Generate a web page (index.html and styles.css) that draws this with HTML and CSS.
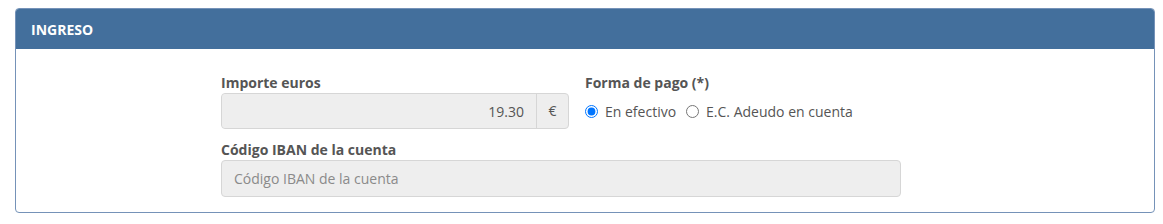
FILE: index.html
```html
<html>
  <head>
    <link rel="stylesheet" href="styles.css">
    <title>Ingreso</title>
  </head>
  <body>
    <section class="panel">
      <div class="panel-heading">INGRESO</div>
      <div class="panel-body">
        <div class="row">
          <div class="field field-amount">
            <label class="field-label">Importe euros</label>
            <div class="input-group">
              <input class="input input-amount" type="text" value="19.30" readonly />
              <span class="addon">€</span>
            </div>
          </div>
          <div class="field">
            <label class="field-label">Forma de pago (*)</label>
            <div class="radios">
              <label class="radio"><input type="radio" name="pago" checked /> En efectivo</label>
              <label class="radio"><input type="radio" name="pago" /> E.C. Adeudo en cuenta</label>
            </div>
          </div>
        </div>
        <div class="field field-iban">
          <label class="field-label">Código IBAN de la cuenta</label>
          <input class="input" type="text" placeholder="Código IBAN de la cuenta" readonly />
        </div>
      </div>
    </section>
  </body>
</html>
```

FILE: styles.css
```css
body {
  margin: 8px 8px 0 15px;
  background-color: #fff;
  color: #555;
  font-family: "Open Sans", sans-serif;
  font-size: 14px;
}
.panel {
  border: 1px solid #7592b8;
  border-radius: 4px;
  overflow: hidden;
}
.panel-heading {
  height: 40px;
  line-height: 41px;
  padding: 0 15px;
  background-color: #436f9c;
  color: #fff;
  font-size: 14px;
  font-weight: 700;
}
.panel-body {
  padding: 24px 0 15px 205px;
}
.row {
  display: flex;
  gap: 16px;
}
.field {
  display: flex;
  flex-direction: column;
}
.field-amount {
  width: 348px;
}
.field-iban {
  width: 680px;
  margin-top: 11px;
}
.field-label {
  height: 20px;
  line-height: 20px;
  font-weight: 700;
  color: #555;
}
.input-group {
  display: flex;
  height: 36px;
  border: 1px solid #d6d6d6;
  border-radius: 4px;
  background-color: #eee;
  box-sizing: border-box;
}
.input {
  height: 37px;
  padding: 0 12px;
  border: 1px solid #d6d6d6;
  border-radius: 4px;
  background-color: #eee;
  color: #555;
  font-family: inherit;
  font-size: 14px;
  box-sizing: border-box;
}
.input::placeholder {
  color: #8a8a8a;
}
.input-amount {
  flex: 1;
  min-width: 0;
  height: 100%;
  border: 0;
  border-right: 1px solid #d6d6d6;
  border-radius: 4px 0 0 4px;
  text-align: right;
}
.addon {
  width: 31px;
  line-height: 34px;
  text-align: center;
}
.radios {
  display: flex;
  gap: 10px;
  height: 36px;
  padding-top: 1px;
  box-sizing: border-box;
  align-items: center;
}
.radio {
  display: flex;
  align-items: center;
  gap: 7px;
}
.radio input {
  width: 13px;
  height: 13px;
  margin: 0;
}
```
